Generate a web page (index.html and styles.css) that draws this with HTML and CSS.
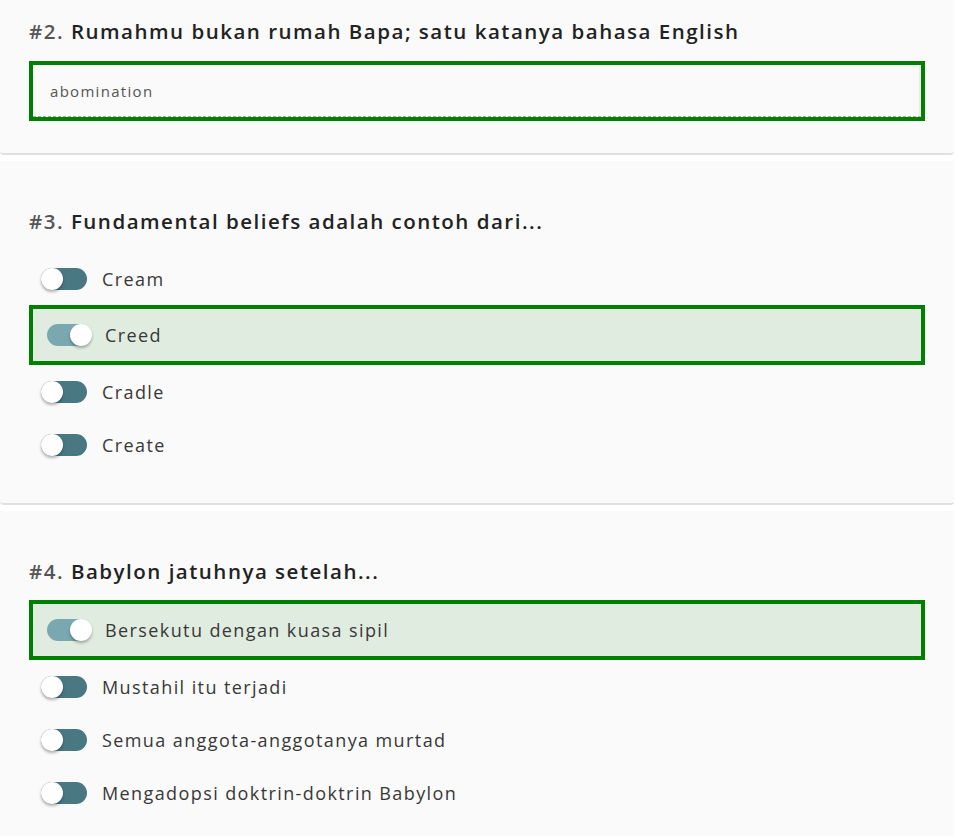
FILE: index.html
```html
<!DOCTYPE html>
<html lang="id">
<head>
<meta charset="utf-8">
<title>Quiz</title>
<link rel="stylesheet" href="styles.css">
</head>
<body>
<div class="list">
  <section class="card">
    <h2 class="q"><span class="num">#2.</span> Rumahmu bukan rumah Bapa; satu katanya bahasa English</h2>
    <div class="answer-box">
      <div class="answer-input">abomination</div>
    </div>
  </section>

  <section class="card">
    <h2 class="q"><span class="num">#3.</span> Fundamental beliefs adalah contoh dari...</h2>
    <div class="opt"><span class="toggle"><span class="knob"></span></span><span class="label">Cream</span></div>
    <div class="opt selected"><span class="toggle on"><span class="knob"></span></span><span class="label">Creed</span></div>
    <div class="opt"><span class="toggle"><span class="knob"></span></span><span class="label">Cradle</span></div>
    <div class="opt"><span class="toggle"><span class="knob"></span></span><span class="label">Create</span></div>
  </section>

  <section class="card">
    <h2 class="q"><span class="num">#4.</span> Babylon jatuhnya setelah...</h2>
    <div class="opt selected"><span class="toggle on"><span class="knob"></span></span><span class="label">Bersekutu dengan kuasa sipil</span></div>
    <div class="opt"><span class="toggle"><span class="knob"></span></span><span class="label">Mustahil itu terjadi</span></div>
    <div class="opt"><span class="toggle"><span class="knob"></span></span><span class="label">Semua anggota-anggotanya murtad</span></div>
    <div class="opt"><span class="toggle"><span class="knob"></span></span><span class="label">Mengadopsi doktrin-doktrin Babylon</span></div>
  </section>
</div>
</body>
</html>
```

FILE: styles.css
```css
html, body {
  margin: 0;
  padding: 0;
  background: #ffffff;
  overflow: hidden;
}

body {
  font-family: "Open Sans", "Noto Sans", "Liberation Sans", sans-serif;
  color: #333333;
}

.list {
  margin-top: -29px;
  width: 954px;
}

.card {
  background: #fafafa;
  padding: 47px 29px 32px 29px;
  border-bottom: 2px solid #e0e0e0;
  border-radius: 0 0 4px 4px;
  margin-bottom: 6px;
}

.q {
  margin: 0 0 18px 0;
  font-size: 20.5px;
  line-height: 26px;
  font-weight: 600;
  color: #222222;
  letter-spacing: 1.5px;
}

.card:first-child .q {
  margin-bottom: 17px;
}

.card:last-child .q {
  margin-bottom: 16px;
}

.num {
  color: #555555;
}

.answer-box {
  border: 4px solid #008000;
  background: #fafafa;
}

.answer-input {
  height: 52px;
  box-sizing: border-box;
  padding-left: 17px;
  display: flex;
  align-items: center;
  font-size: 15px;
  letter-spacing: 1.3px;
  color: #555555;
  border-bottom: 1px dashed #aaaaaa;
  border-right: 2px solid #ececec;
}

.opt {
  display: flex;
  align-items: center;
  gap: 15px;
  height: 53px;
  padding-left: 12px;
  box-sizing: border-box;
}

.opt.selected {
  height: 60px;
  border: 4px solid #008000;
  background: #e1ece0;
  padding-left: 14px;
  gap: 14px;
}

.label {
  font-size: 18px;
  letter-spacing: 1.4px;
  color: #383838;
}

.toggle {
  position: relative;
  display: inline-block;
  width: 46px;
  height: 22px;
  border-radius: 11px;
  background: #4a7882;
  flex: none;
}

.toggle.on {
  width: 44px;
  background: #7aa8b1;
}

.knob {
  position: absolute;
  top: 0;
  left: 0;
  width: 22px;
  height: 22px;
  border-radius: 50%;
  background: #ffffff;
  box-shadow: 0 2px 3px rgba(0, 0, 0, 0.3);
}

.toggle.on .knob {
  left: auto;
  right: -1px;
}
```
